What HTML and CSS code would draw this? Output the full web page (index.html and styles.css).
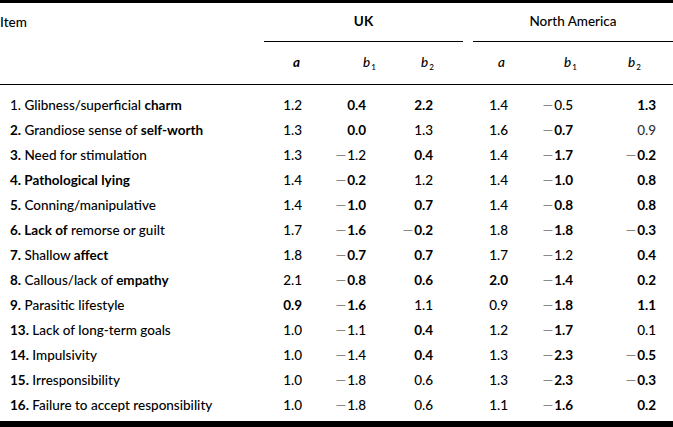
FILE: index.html
```html
<!DOCTYPE html>
<html lang="en">
<head>
<meta charset="utf-8">
<title>Item parameters</title>
<link rel="stylesheet" href="styles.css">
</head>
<body>
<table class="data">
  <colgroup>
    <col class="w-item"><col class="w-num"><col class="w-num2"><col class="w-num"><col class="w-gap"><col class="w-num2"><col class="w-num"><col class="w-num2">
  </colgroup>
  <thead>
    <tr class="group">
      <th class="item-h">Item</th>
      <th colspan="3" class="grp uk">UK</th>
      <th class="gap"></th>
      <th colspan="3" class="grp">North America</th>
    </tr>
    <tr class="sub">
      <th></th>
      <th class="h1"><i class="pa">a</i></th>
      <th class="h2"><i>b</i><sub>1</sub></th>
      <th class="h3"><i>b</i><sub>2</sub></th>
      <th class="gap"></th>
      <th class="h5"><i>a</i></th>
      <th class="h6"><i>b</i><sub>1</sub></th>
      <th class="h7"><i>b</i><sub>2</sub></th>
    </tr>
  </thead>
  <tbody>
    <tr><td class="lab">1. Glibness/superficial <b>charm</b></td><td class="n1">1.2</td><td class="n2"><b>0.4</b></td><td class="n3"><b>2.2</b></td><td></td><td class="n5">1.4</td><td class="n6"><span class="m">−</span>0.5</td><td class="n7"><b>1.3</b></td></tr>
    <tr><td class="lab"><b>2.</b> Grandiose sense of <b>self-worth</b></td><td class="n1">1.3</td><td class="n2"><b>0.0</b></td><td class="n3">1.3</td><td></td><td class="n5">1.6</td><td class="n6"><span class="m">−</span><b>0.7</b></td><td class="n7 lt">0.9</td></tr>
    <tr><td class="lab"><b>3.</b> Need for stimulation</td><td class="n1">1.3</td><td class="n2"><span class="m">−</span>1.2</td><td class="n3"><b>0.4</b></td><td></td><td class="n5">1.4</td><td class="n6"><span class="m">−</span><b>1.7</b></td><td class="n7"><span class="m">−</span><b>0.2</b></td></tr>
    <tr><td class="lab"><b>4. Pathological lying</b></td><td class="n1">1.4</td><td class="n2"><span class="m">−</span><b>0.2</b></td><td class="n3">1.2</td><td></td><td class="n5">1.4</td><td class="n6"><span class="m">−</span><b>1.0</b></td><td class="n7"><b>0.8</b></td></tr>
    <tr><td class="lab"><b>5.</b> Conning/manipulative</td><td class="n1">1.4</td><td class="n2"><span class="m">−</span><b>1.0</b></td><td class="n3"><b>0.7</b></td><td></td><td class="n5">1.4</td><td class="n6"><span class="m">−</span><b>0.8</b></td><td class="n7"><b>0.8</b></td></tr>
    <tr><td class="lab"><b>6. Lack of</b> remorse or guilt</td><td class="n1">1.7</td><td class="n2"><span class="m">−</span><b>1.6</b></td><td class="n3"><span class="m">−</span><b>0.2</b></td><td></td><td class="n5">1.8</td><td class="n6"><span class="m">−</span><b>1.8</b></td><td class="n7"><span class="m">−</span><b>0.3</b></td></tr>
    <tr><td class="lab"><b>7.</b> Shallow <b>affect</b></td><td class="n1">1.8</td><td class="n2"><span class="m">−</span><b>0.7</b></td><td class="n3"><b>0.7</b></td><td></td><td class="n5">1.7</td><td class="n6"><span class="m">−</span>1.2</td><td class="n7"><b>0.4</b></td></tr>
    <tr><td class="lab"><b>8.</b> Callous/lack of <b>empathy</b></td><td class="n1">2.1</td><td class="n2"><span class="m">−</span><b>0.8</b></td><td class="n3"><b>0.6</b></td><td></td><td class="n5"><b>2.0</b></td><td class="n6"><span class="m">−</span><b>1.4</b></td><td class="n7"><b>0.2</b></td></tr>
    <tr><td class="lab"><b>9.</b> Parasitic lifestyle</td><td class="n1"><b>0.9</b></td><td class="n2"><span class="m">−</span><b>1.6</b></td><td class="n3">1.1</td><td></td><td class="n5">0.9</td><td class="n6"><span class="m">−</span><b>1.8</b></td><td class="n7"><b>1.1</b></td></tr>
    <tr><td class="lab"><b>13.</b> Lack of long-term goals</td><td class="n1">1.0</td><td class="n2"><span class="m">−</span>1.1</td><td class="n3"><b>0.4</b></td><td></td><td class="n5">1.2</td><td class="n6"><span class="m">−</span><b>1.7</b></td><td class="n7">0.1</td></tr>
    <tr><td class="lab"><b>14.</b> Impulsivity</td><td class="n1">1.0</td><td class="n2"><span class="m">−</span>1.4</td><td class="n3"><b>0.4</b></td><td></td><td class="n5">1.3</td><td class="n6"><span class="m">−</span><b>2.3</b></td><td class="n7"><span class="m">−</span><b>0.5</b></td></tr>
    <tr><td class="lab"><b>15.</b> Irresponsibility</td><td class="n1">1.0</td><td class="n2"><span class="m">−</span>1.8</td><td class="n3">0.6</td><td></td><td class="n5">1.3</td><td class="n6"><span class="m">−</span><b>2.3</b></td><td class="n7"><span class="m">−</span><b>0.3</b></td></tr>
    <tr><td class="lab"><b>16.</b> Failure to accept responsibility</td><td class="n1">1.0</td><td class="n2"><span class="m">−</span>1.8</td><td class="n3">0.6</td><td></td><td class="n5">1.1</td><td class="n6"><span class="m">−</span><b>1.6</b></td><td class="n7"><b>0.2</b></td></tr>
  </tbody>
</table>
</body>
</html>
```
FILE: styles.css
```css
html, body {
  margin: 0;
  padding: 0;
  background: #fff;
}
body {
  font-family: Lato, "Open Sans", "DejaVu Sans", sans-serif;
  font-size: 13.5px;
  font-weight: 500;
  color: #000;
}
.data {
  width: 673px;
  table-layout: fixed;
  border-collapse: separate;
  border-spacing: 0;
  border-top: 3px solid #000;
  border-bottom: 6px solid #000;
}
.w-item { width: 264px; }
.w-num { width: 66px; }
.w-num2 { width: 67px; }
.w-gap { width: 10px; }
.data th, .data td {
  padding: 0;
  font-weight: 500;
  white-space: nowrap;
}
.data b { font-weight: bold; }
.group th {
  padding-top: 10px;
  padding-bottom: 12px;
  line-height: 16px;
}
.item-h {
  text-align: left;
  padding-left: 1px;
}
.grp {
  text-align: center;
  border-bottom: 1px solid #000;
}
.data .grp.uk { font-weight: bold; }
.group .gap { border-bottom: 0; }
.sub th {
  padding-top: 12px;
  padding-bottom: 14px;
  line-height: 16px;
  border-bottom: 1px solid #000;
  text-align: left;
}
.sub i { font-style: italic; }
.sub .pa { font-weight: bold; }
.sub sub {
  font-size: 8px;
  vertical-align: -3px;
  line-height: 0;
  margin-left: 1px;
}
.h1 { padding-left: 29px !important; }
.h2 { padding-left: 33px !important; }
.h3 { padding-left: 24px !important; }
.h5 { padding-left: 25px !important; }
.h6 { padding-left: 24px !important; }
.h7 { padding-left: 22px !important; }
tbody td {
  line-height: 25px;
  text-align: right;
}
tbody tr:first-child td { padding-top: 8px; }
tbody tr:last-child td { padding-bottom: 3px; }
tbody td.lab {
  text-align: left;
  padding-left: 10px;
}
.n1 { padding-right: 28px !important; }
.n2 { padding-right: 31px !important; }
.n3 { padding-right: 30px !important; }
.n5 { padding-right: 32px !important; }
.n6 { padding-right: 33px !important; }
.n7 { padding-right: 17px !important; }
.lt { color: #333; }
.m {
  display: inline-block;
  color: #888;
  transform: scaleX(1.5);
  transform-origin: right center;
  margin-right: 0;
  margin-left: 3px;
}
```
